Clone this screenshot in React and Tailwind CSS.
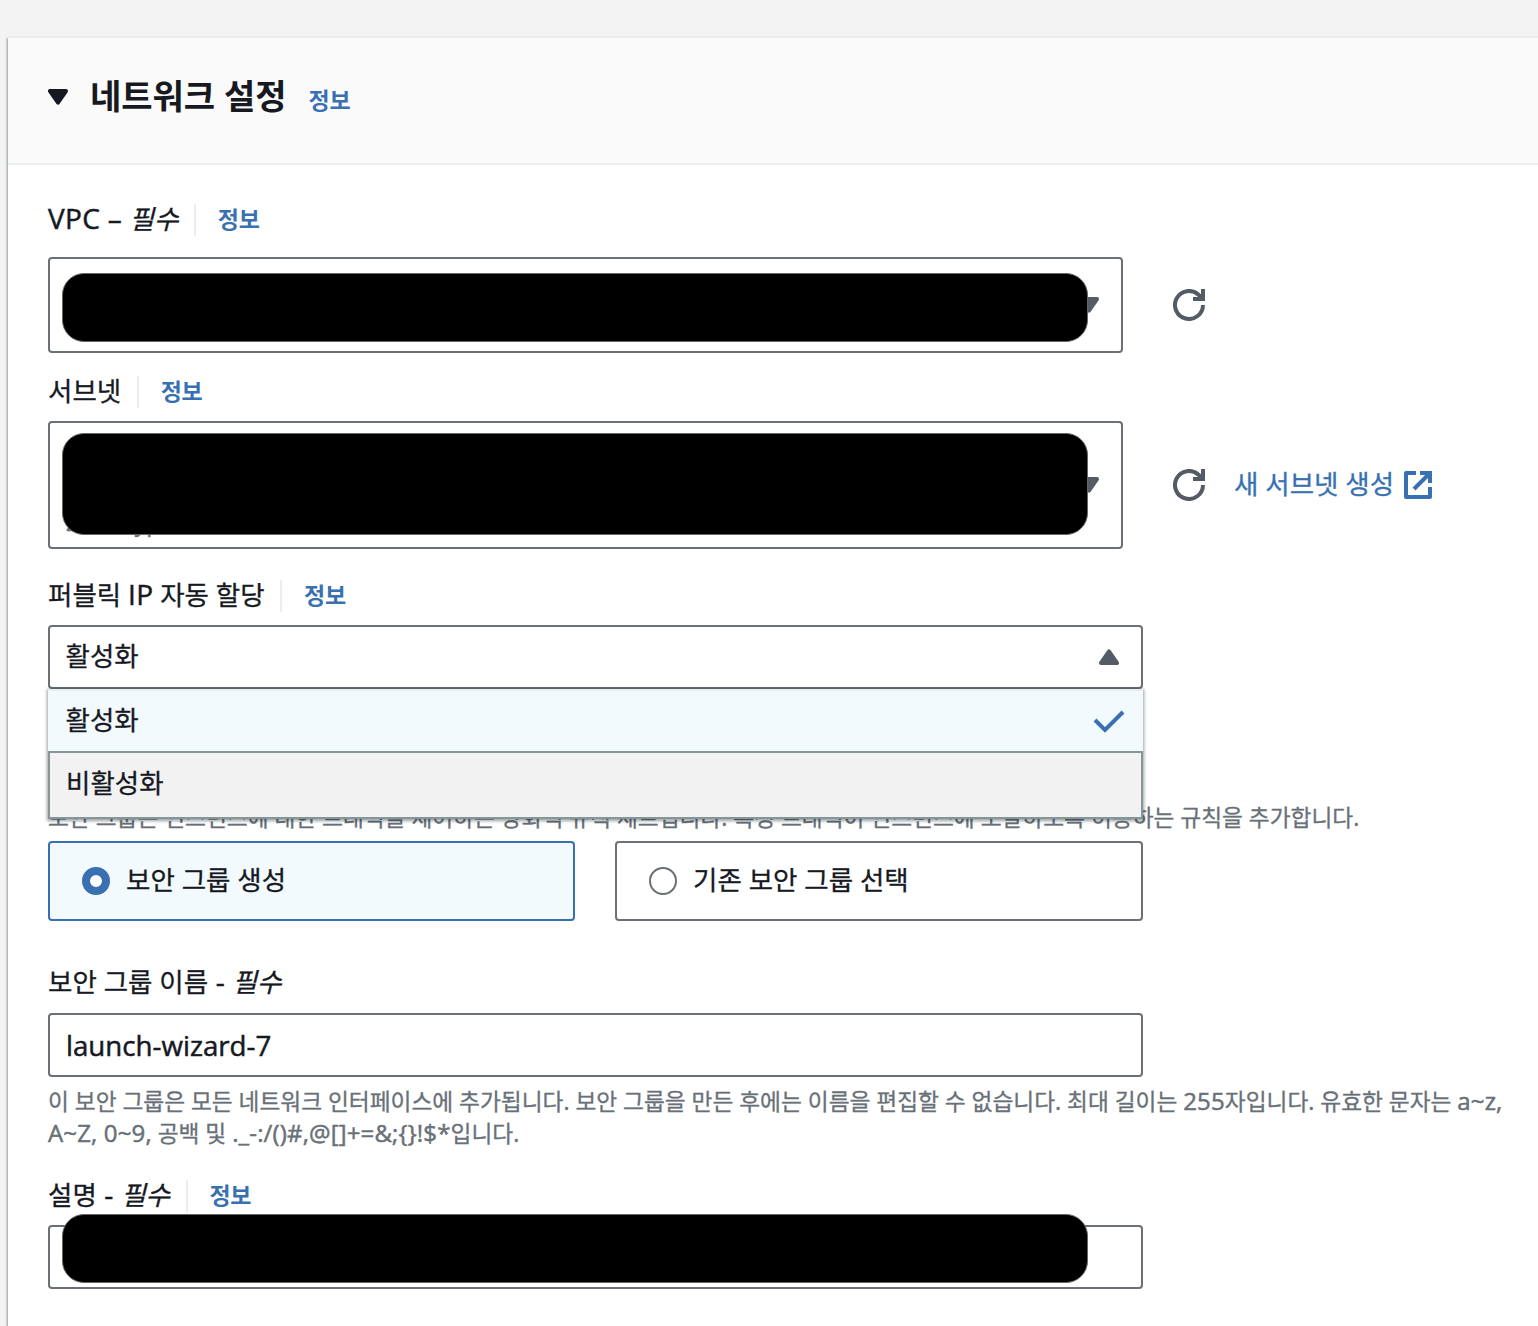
import React, { useState } from "react";

function Caret({ up, className = "" }) {
  return (
    <svg viewBox="0 0 20 16" className={`w-5 h-4 ${up ? "rotate-180" : ""} ${className}`} fill="currentColor" stroke="currentColor" strokeWidth="4" strokeLinejoin="round">
      <path d="M2 2h16L10 13.6z" />
    </svg>
  );
}

function RefreshIcon() {
  return (
    <svg viewBox="0 0 32 32" className="w-8 h-8 text-[#545b64]" fill="none" stroke="currentColor" strokeWidth="4">
      <path d="M30 16a14 14 0 1 1-4.5-10.3L30 10" />
      <path d="M30 0v10H20" />
    </svg>
  );
}

function ExternalIcon() {
  return (
    <svg viewBox="0 0 28 28" className="w-7 h-7" fill="none" stroke="currentColor" strokeWidth="4" strokeLinejoin="round">
      <path d="M12 2H2v24h24V16" />
      <path d="M16 2h10v10M26 2L10 18" strokeLinejoin="miter" />
    </svg>
  );
}

function Info({ className = "" }) {
  return <a className={`text-[23px] font-bold tracking-[-0.3px] text-[#3870b2] cursor-pointer [-webkit-text-stroke:0] ${className}`}>정보</a>;
}

// latin runs are set slightly larger than the hangul around them
function Latin({ children, small }) {
  return (
    <span className={`font-['Open_Sans',sans-serif] font-medium leading-none [-webkit-text-stroke:0.5px] ${small ? "text-[24px] tracking-[0.15px]" : "text-[28px] tracking-[0.3px]"}`}>
      {children}
    </span>
  );
}

function Label({ children, required, info }) {
  return (
    <div className="flex h-8 items-center whitespace-pre text-[26.5px] leading-8">
      <div className="-mt-[3px]">
        {children}
        {required && <em>필수</em>}
      </div>
      {info && (
        <>
          <span className="ml-[15.5px] mr-[22px] h-8 w-0.5 bg-[#eaeded]" />
          <Info className="-mt-0.5" />
        </>
      )}
    </div>
  );
}

function Redacted({ className }) {
  return <div className={`absolute left-3 w-[1026px] rounded-[22px] border border-[#666] bg-black ${className}`} />;
}

const options = ["활성화", "비활성화"];

export default function App() {
  const [group, setGroup] = useState("new");
  const [name, setName] = useState("launch-wizard-7");

  const tile = (key) => `flex h-20 items-center gap-4 rounded-[4px] border-2 pl-8 ${group === key ? "border-[#3870b2] bg-[#f2fafd]" : "border-[#6a7075]"}`;
  const radio = (key) => `size-7 rounded-full bg-white ${group === key ? "border-8 border-[#3870b2]" : "border-2 border-[#6a7075]"}`;

  return (
    <div className="h-[1326px] w-[1538px] overflow-hidden bg-[#f3f3f3] pt-9 pl-2 font-['Noto_Sans','Noto_Sans_CJK_KR',sans-serif] text-[#16191f]">
      <section className="h-[1290px] border-t-2 border-[#eaeded] bg-white shadow-[-1px_2px_2px_0_rgba(0,28,36,0.4)]">
        <header className="flex h-[127px] items-center border-b-2 border-[#eaeded] bg-[#fafafa] pl-10 pb-[8px]">
          <Caret />
          <h2 className="ml-[22px] text-[34px] font-bold">네트워크 설정</h2>
          <Info className="ml-[22px] mt-2" />
        </header>

        <div className="pl-10 pt-[39px] [-webkit-text-stroke:0.3px]">
          <Label required info><Latin>{"VPC – "}</Latin></Label>
          <div className="mt-[21px] flex items-center">
            <div className="relative h-24 w-[1075px] rounded-[4px] border-2 border-[#6a7075]">
              <Caret className="absolute right-[22px] top-[38px] text-[#545b64]" />
              <Redacted className="top-[14px] h-[69px]" />
            </div>
            <div className="ml-[50px]"><RefreshIcon /></div>
          </div>

          <div className="mt-[23px]"><Label info>서브넷</Label></div>
          <div className="mt-[13px] flex items-center">
            <div className="relative h-32 w-[1075px] rounded-[4px] border-2 border-[#6a7075]">
              <span className="absolute left-4 top-[87px] text-[23px] leading-6 text-[#687078]">Zone type</span>
              <Caret className="absolute right-[22px] top-[54px] text-[#545b64]" />
              <Redacted className="top-[10px] h-[102px]" />
            </div>
            <div className="ml-[50px]"><RefreshIcon /></div>
            <a className="ml-[29px] flex items-center gap-[10px] text-[26.5px] leading-8 text-[#3870b2]">
              <span className="-mt-[3px]">새 서브넷 생성</span>
              <ExternalIcon />
            </a>
          </div>

          <div className="mt-[31px]"><Label info>퍼블릭 <Latin>IP</Latin> 자동 할당</Label></div>
          <div className="relative mt-[13px] w-[1095px] text-[26.5px] leading-8">
            <div className="flex h-16 items-center justify-between rounded-[4px] border-2 border-[#6a7075] bg-white pl-[15.5px] pr-[22px]">
              <span className="-mt-[2px]">{options[0]}</span>
              <Caret up className="text-[#545b64]" />
            </div>
            <ul className="absolute left-0 top-16 z-10 w-full shadow-[0_1px_3px_1px_rgba(0,28,36,0.4)]">
              <li className="flex h-[62px] items-center justify-between border-t-2 border-[#eaeded] bg-[#f2fafd] pl-[17.5px] pr-[18px]">
                <span className="-mt-[2px]">{options[0]}</span>
                <svg viewBox="0 0 32 24" className="mt-0.5 w-8 h-6 text-[#3870b2]" fill="none" stroke="currentColor" strokeWidth="4">
                  <path d="M2 10l10 10L30 2" />
                </svg>
              </li>
              <li className="flex h-[68px] items-center border-2 border-[#879596] bg-[#f2f2f2] pl-4 pb-[5px]">{options[1]}</li>
            </ul>
          </div>

          <p className="mt-[113px] h-[31px] whitespace-nowrap text-[22.69px] leading-8 text-[#687078]">
            보안 그룹은 인스턴스에 대한 트래픽을 제어하는 방화벽 규칙 세트입니다. 특정 트래픽이 인스턴스에 도달하도록 허용하는 규칙을 추가합니다.
          </p>
          <div className="mt-2 grid w-[1095px] grid-cols-[527px_528px] gap-10 text-[26.5px] leading-8">
            <div onClick={() => setGroup("new")} className={tile("new")}>
              <span className={radio("new")} />
              <span className="-mt-[2px]">보안 그룹 생성</span>
            </div>
            <div onClick={() => setGroup("existing")} className={tile("existing")}>
              <span className={radio("existing")} />
              <span className="-mt-[2px]">기존 보안 그룹 선택</span>
            </div>
          </div>

          <div className="mt-[46px]"><Label required>보안 그룹 이름<Latin>{" - "}</Latin></Label></div>
          <input
            value={name}
            onChange={(e) => setName(e.target.value)}
            className="mt-[14px] block h-16 w-[1095px] rounded-[4px] border-2 border-[#6a7075] pl-4 font-['Open_Sans',sans-serif] text-[27.7px] font-medium [-webkit-text-stroke:0.5px]"
          />
          <p className="mt-[9px] whitespace-nowrap text-[22.69px] leading-8 text-[#687078]">
            이 보안 그룹은 모든 네트워크 인터페이스에 추가됩니다. 보안 그룹을 만든 후에는 이름을 편집할 수 없습니다. 최대 길이는 <Latin small>255</Latin>자입니다. 유효한 문자는 <Latin small>a~z,</Latin>
            <br />
            <Latin small>A~Z, 0~9,</Latin> 공백 및 <Latin small>{"._-:/()#,@[]+=&;{}!$*"}</Latin>입니다.
          </p>

          <div className="mt-[30px]"><Label required info>설명<Latin>{" - "}</Latin></Label></div>
          <div className="relative mt-[13px] h-16 w-[1095px] rounded-[4px] border-2 border-[#6a7075]">
            <Redacted className="-top-[13px] h-[69px]" />
          </div>
        </div>
      </section>
    </div>
  );
}
